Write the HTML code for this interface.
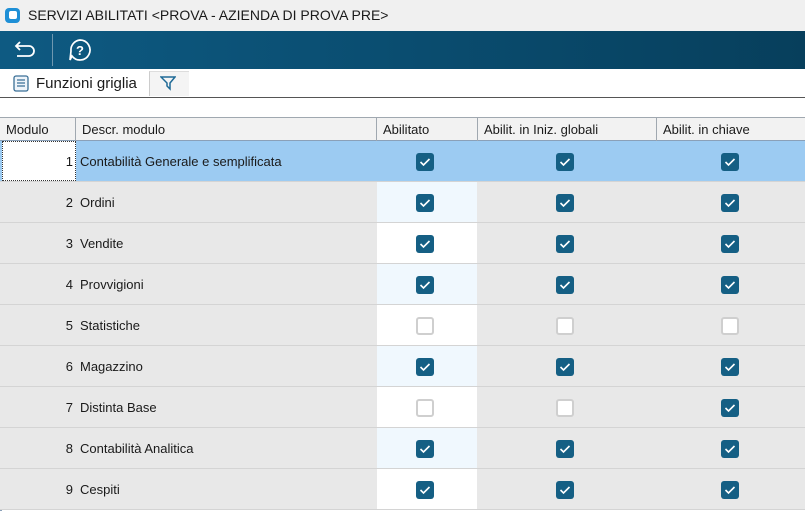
<!DOCTYPE html>
<html><head><meta charset="utf-8"><style>
*{margin:0;padding:0;box-sizing:border-box}
body{width:805px;height:511px;overflow:hidden;background:#fff;font-family:"Liberation Sans",sans-serif;color:#1a1a1a;position:relative}
.title{position:absolute;left:0;top:0;width:805px;height:31px;background:#f0f0f0;line-height:31px;padding-left:28px;font-size:14px}
.logo{position:absolute;left:5px;top:8px;width:15px;height:15px;background:#1e8fd6;border-radius:4px}
.logo:after{content:"";position:absolute;left:4px;top:3px;width:8px;height:8px;background:#fff;border-radius:2px}
.tb{position:absolute;left:0;top:31px;width:805px;height:38px;background:linear-gradient(90deg,#0e5a82,#0a4d70 50%,#073f5c)}
.sep{position:absolute;left:52px;top:3px;width:1px;height:32px;background:#6f98b0}
.fb{position:absolute;left:0;top:69px;width:805px;height:29px;border-bottom:1px solid #555;font-size:15px}
.row{position:absolute;left:0;width:805px;height:41px;border-bottom:1px solid #d4d4d4}
.c{position:absolute;top:0;height:100%}
.hdr{position:absolute;top:117px;left:0;width:805px;height:24px;background:#f2f2f2;border-top:1px solid #a0a8b0;border-bottom:1px solid #8aa0b8;font-size:13px}
.hdr div{position:absolute;top:0;height:23px;line-height:23px;padding-left:6px;border-right:1px solid #a0a8b0}
.cb{position:absolute;top:12px;width:18px;height:18px;border-radius:3px;background:#155f84}
.cb svg{position:absolute;left:3px;top:4px}
.un{background:#fff;border:2px solid #cfcfcf}
.num{position:absolute;right:0;width:73px;text-align:right;top:0;line-height:42px;font-size:13px}
.txt{position:absolute;left:80px;line-height:42px;font-size:13px}
</style></head><body>
<div class="title"><div class="logo"></div>SERVIZI ABILITATI &lt;PROVA - AZIENDA DI PROVA PRE&gt;</div>
<div class="tb">
<svg style="position:absolute;left:13px;top:9px" width="24" height="20" viewBox="0 0 24 20"><path d="M7 2 L3 6 L7 10 M3 6 H16 A5 5 0 0 1 16 16 H4" fill="none" stroke="#fff" stroke-width="1.8"/></svg>
<div class="sep"></div>
<svg style="position:absolute;left:68px;top:7px" width="24" height="24" viewBox="0 0 24 24"><path d="M12 2 A10 10 0 1 1 4 18 L2 22 L3 13 A10 10 0 0 1 12 2Z" fill="none" stroke="#fff" stroke-width="1.7"/><text x="12" y="17" text-anchor="middle" fill="#fff" font-size="13" font-weight="bold" font-family="Liberation Sans">?</text></svg>
</div>
<div class="fb">
<svg style="position:absolute;left:13px;top:6px" width="16" height="17" viewBox="0 0 16 17"><rect x="1" y="1" width="14" height="15" rx="2" fill="#eef4fa" stroke="#3a6f96" stroke-width="1.3"/><path d="M4 5h8M4 8h8M4 11h8" stroke="#3a6f96" stroke-width="1.2"/></svg>
<span style="position:absolute;left:36px;top:6px">Funzioni griglia</span>
<div style="position:absolute;left:149px;top:2px;width:40px;height:25px;background:#f4f4f4;border-left:1px solid #ccc;border-top:1px solid #ddd"></div>
<svg style="position:absolute;left:160px;top:6px" width="16" height="16" viewBox="0 0 16 16"><path d="M1 2H15L10 8V14L7 11V8Z" fill="none" stroke="#1e6a96" stroke-width="1.5"/></svg>
</div>
<div class="hdr">
<div style="left:0;width:76px">Modulo</div>
<div style="left:76px;width:301px">Descr. modulo</div>
<div style="left:377px;width:101px">Abilitato</div>
<div style="left:478px;width:179px">Abilit. in Iniz. globali</div>
<div style="left:657px;width:148px;border:none">Abilit. in chiave</div>
</div>
<div style="position:absolute;left:0;top:141px;width:2px;height:370px;background:#8aa0b8"></div>
<div id="rows"></div>
<script>
var d=[["Contabilità Generale e semplificata",1,1,1],["Ordini",1,1,1],["Vendite",1,1,1],["Provvigioni",1,1,1],["Statistiche",0,0,0],["Magazzino",1,1,1],["Distinta Base",0,0,1],["Contabilità Analitica",1,1,1],["Cespiti",1,1,1]];
var h="",ck='<svg width="12" height="10" viewBox="0 0 12 10"><path d="M1.5 5L4.5 8L10.5 2" fill="none" stroke="#fff" stroke-width="1.6"/></svg>';
function cb(x,v){return '<div class="cb'+(v?'':' un')+'" style="left:'+x+'px">'+(v?ck:'')+'</div>';}
d.forEach(function(r,i){var t=141+i*41,sel=i==0;
h+='<div class="row" style="top:'+t+'px;background:'+(sel?'#9ccbf2':'#e8e8e8')+'">';
if(sel)h+='<div class="c" style="left:2px;width:74px;background:#fff;border:1px dotted #333"></div>';
else h+='<div class="c" style="left:377px;width:100px;background:'+(i%2?'#f0f8fe':'#fff')+'"></div>';
h+='<div class="num" style="left:0">'+(i+1)+'</div><div class="txt">'+r[0]+'</div>';
h+=cb(416,r[1])+cb(556,r[2])+cb(721,r[3])+'</div>';});
document.getElementById("rows").innerHTML=h;
</script>
</body></html>
